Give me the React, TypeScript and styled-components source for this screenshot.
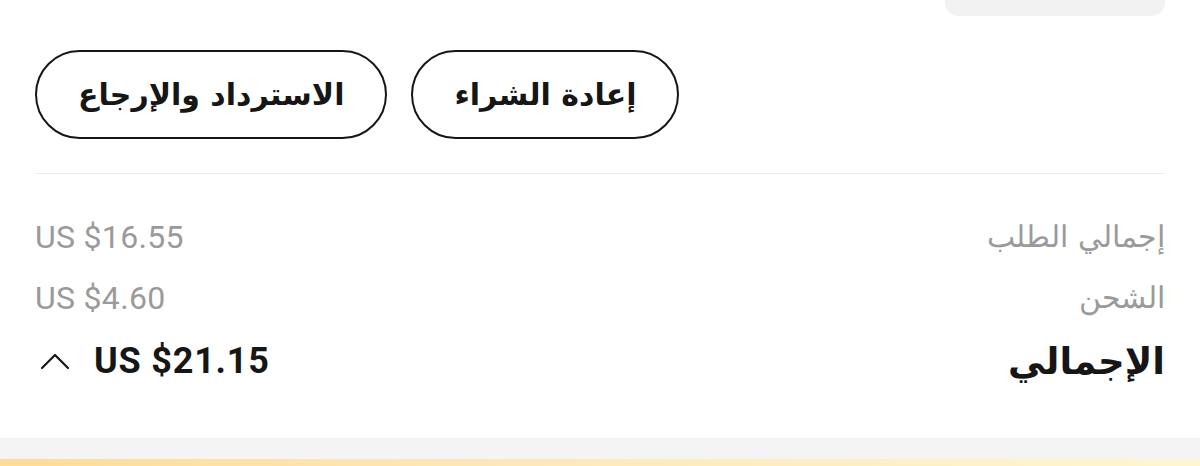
import React from 'react';
import styled, { createGlobalStyle } from 'styled-components';

const GlobalStyle = createGlobalStyle`
  html, body {
    margin: 0;
    padding: 0;
    background: #fff;
  }
  body {
    font-family: "Roboto", "DejaVu Sans", sans-serif;
    color: #191919;
  }
`;

const Page = styled.div`
  width: 1200px;
  height: 466px;
  overflow: hidden;
  display: flex;
  flex-direction: column;
  direction: rtl;
`;

const Section = styled.div`
  padding: 0 35px;
  display: flex;
  flex-direction: column;
`;

const TopRow = styled.div`
  display: flex;
  height: 16px;
  align-items: flex-end;
`;

const ChipTail = styled.div`
  width: 220px;
  height: 46px;
  flex: none;
  background: #f2f2f2;
  border-radius: 0 0 14px 14px;
  position: relative;
  align-self: flex-end;
`;

const ChipGlyph = styled.span`
  position: absolute;
  top: 24px;
  right: 136px;
  width: 12px;
  height: 6px;
  border-radius: 0 0 6px 6px;
  background: #222;
`;

const Actions = styled.div`
  display: flex;
  justify-content: flex-end;
  gap: 24px;
  margin-top: 34px;
`;

const PillButton = styled.button`
  height: 89px;
  padding: 0 41px;
  border: 2.5px solid #161616;
  border-radius: 45px;
  background: #fff;
  font-family: "DejaVu Sans", sans-serif;
  font-weight: 700;
  font-size: 30px;
  color: #161616;
  cursor: pointer;
  direction: rtl;
`;

const Divider = styled.div`
  height: 1px;
  background: #ececec;
  margin-top: 34px;
`;

const Summary = styled.div`
  display: flex;
  flex-direction: column;
  margin-top: 32px;
`;

const Row = styled.div<{ $total?: boolean }>`
  display: flex;
  justify-content: space-between;
  align-items: center;
  height: ${(p) => (p.$total ? 66 : 61)}px;
`;

const Label = styled.span<{ $total?: boolean }>`
  font-family: "DejaVu Sans", sans-serif;
  font-size: ${(p) => (p.$total ? 37 : 30)}px;
  font-weight: ${(p) => (p.$total ? 700 : 300)};
  color: ${(p) => (p.$total ? '#161616' : '#9a9a9a')};
`;

const Amount = styled.span<{ $total?: boolean }>`
  direction: ltr;
  font-family: "Roboto", sans-serif;
  font-size: ${(p) => (p.$total ? 36 : 32)}px;
  letter-spacing: ${(p) => (p.$total ? 0.8 : 0.3)}px;
  font-weight: ${(p) => (p.$total ? 700 : 400)};
  color: ${(p) => (p.$total ? '#161616' : '#9a9a9a')};
`;

const TotalValue = styled.div`
  display: flex;
  align-items: center;
  gap: 24px;
  direction: ltr;
  padding-left: 5px;
`;

const Footer = styled.div`
  margin-top: auto;
  height: 28px;
  background: #f4f4f4;
  display: flex;
  flex-direction: column;
  justify-content: flex-end;
`;

const GoldStrip = styled.div`
  height: 7px;
  background: linear-gradient(90deg, #ffdc96 0%, #fee7b6 40%, #fff6cf 100%);
`;

const Caret = () => (
  <svg width="30" height="18" viewBox="0 0 30 18" fill="none">
    <path d="M2 16 L15 3 L28 16" stroke="#161616" strokeWidth="2.2" strokeLinecap="round" strokeLinejoin="round" />
  </svg>
);

export default function App() {
  return (
    <>
      <GlobalStyle />
      <Page dir="rtl">
        <Section>
          <TopRow>
            <ChipTail>
              <ChipGlyph />
            </ChipTail>
          </TopRow>
          <Actions>
            <PillButton>إعادة الشراء</PillButton>
            <PillButton>الاسترداد والإرجاع</PillButton>
          </Actions>
          <Divider />
          <Summary>
            <Row>
              <Label>إجمالي الطلب</Label>
              <Amount>US $16.55</Amount>
            </Row>
            <Row>
              <Label>الشحن</Label>
              <Amount>US $4.60</Amount>
            </Row>
            <Row $total>
              <Label $total>الإجمالي</Label>
              <TotalValue>
                <Caret />
                <Amount $total>US $21.15</Amount>
              </TotalValue>
            </Row>
          </Summary>
        </Section>
        <Footer>
          <GoldStrip />
        </Footer>
      </Page>
    </>
  );
}
